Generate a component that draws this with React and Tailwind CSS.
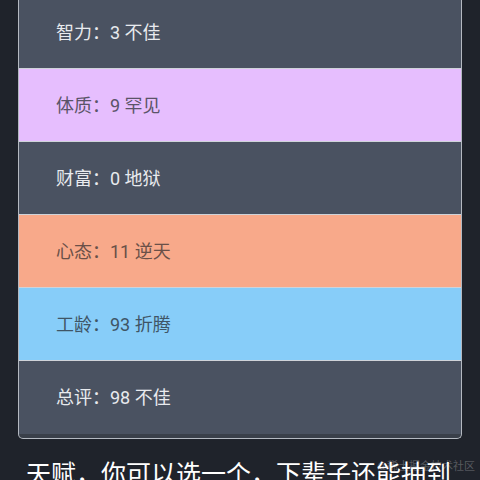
import React from 'react';

const rows = [
  { label: '智力：3 不佳', bg: 'bg-[#4a5261]', text: 'text-[#e8eaee]' },
  { label: '体质：9 罕见', bg: 'bg-[#e6befe]', text: 'text-[#5a5468]' },
  { label: '财富：0 地狱', bg: 'bg-[#4a5261]', text: 'text-[#e8eaee]' },
  { label: '心态：11 逆天', bg: 'bg-[#f8a98a]', text: 'text-[#6a5048]' },
  { label: '工龄：93 折腾', bg: 'bg-[#87cdf9]', text: 'text-[#3f5566]' },
  { label: '总评：98 不佳', bg: 'bg-[#4a5261]', text: 'text-[#e8eaee]' },
];

const App = () => {
  return (
    <div
      className="relative w-[480px] h-[480px] overflow-hidden bg-[#1f232b]"
      style={{ fontFamily: 'Roboto, "Noto Sans CJK SC", sans-serif' }}
    >
      <div className="mx-[18px] -mt-[4px] border-x border-b border-[#b4b9c1] rounded-b-[5px] overflow-hidden bg-[#3a404a]">
        {rows.map((row, i) => (
          <div
            key={i}
            className={`h-[73px] flex items-center pl-[37px] text-[18px] ${row.bg} ${row.text} ${
              i < rows.length - 1 ? 'border-b border-[#cfd3d9]' : ''
            }`}
          >
            {row.label}
          </div>
        ))}
        <div className="h-[4px]" />
      </div>
      <div className="mt-[16px] pl-[26px] text-[25px] leading-[40px] text-white whitespace-nowrap">
        天赋，你可以选一个，下辈子还能抽到
      </div>
      <div className="absolute right-[5px] top-[459px] text-[11px] text-white/25 whitespace-nowrap">
        @稀土掘金技术社区
      </div>
    </div>
  );
};

export default App;
